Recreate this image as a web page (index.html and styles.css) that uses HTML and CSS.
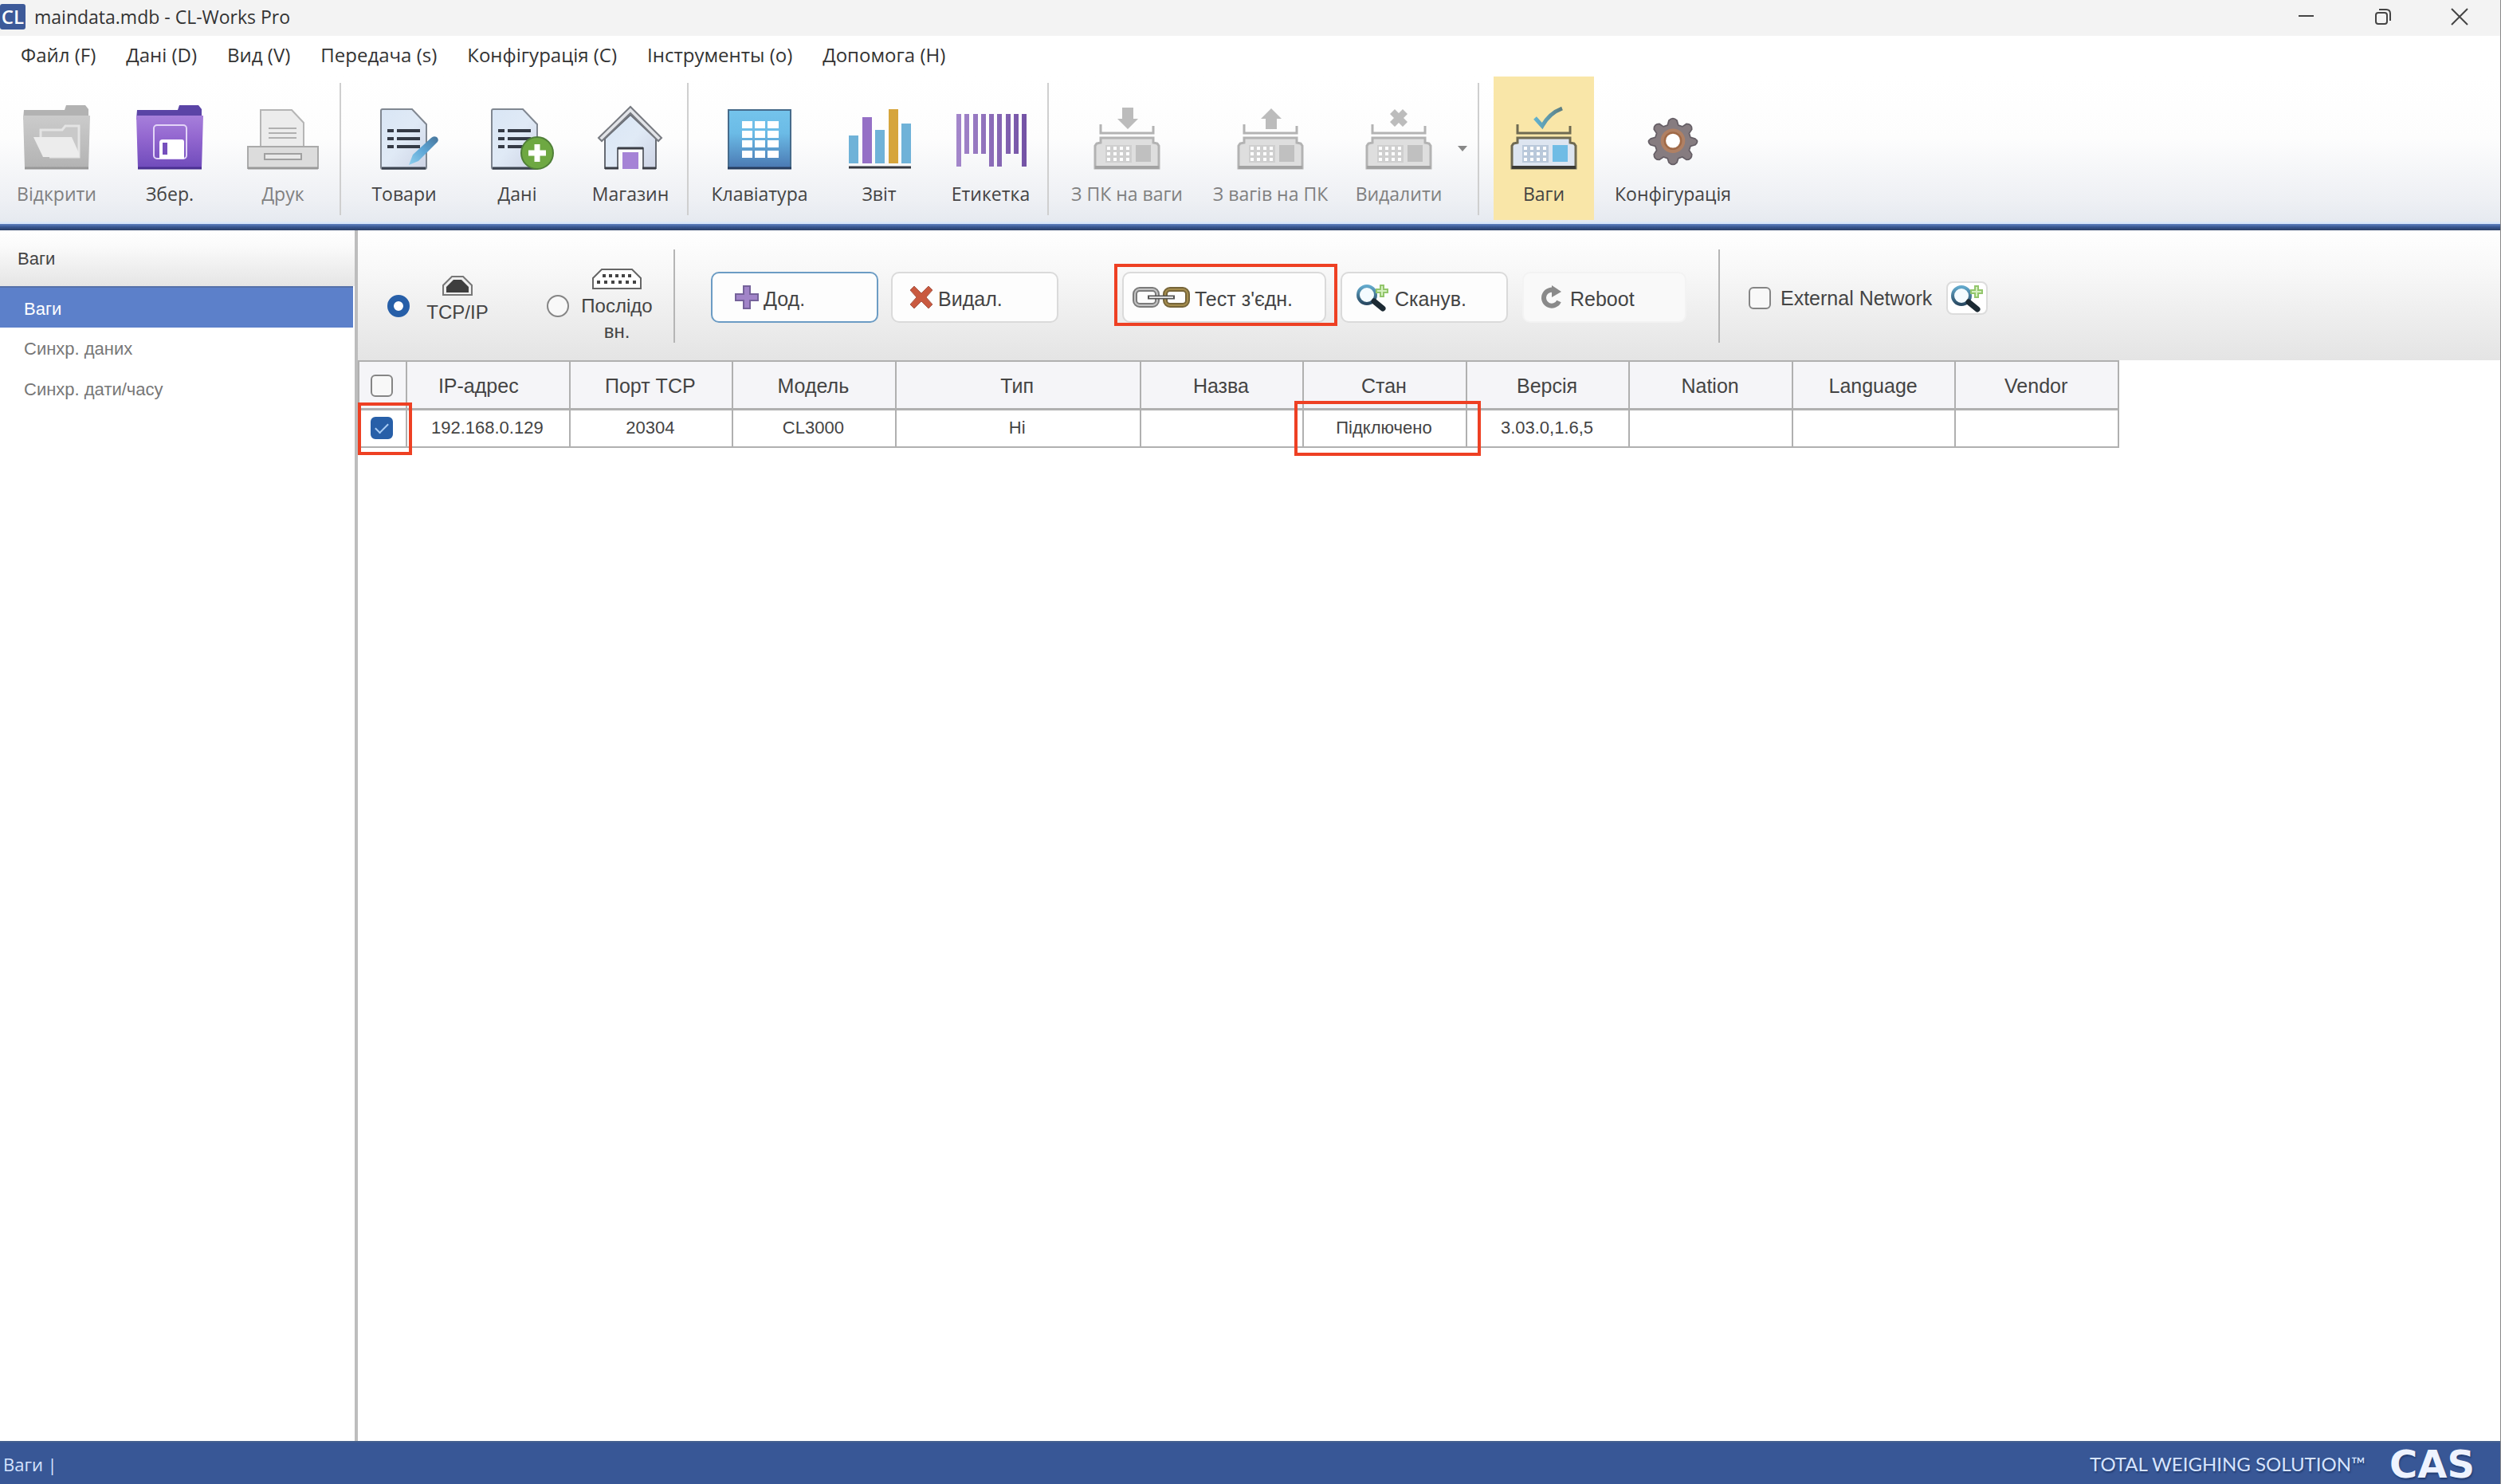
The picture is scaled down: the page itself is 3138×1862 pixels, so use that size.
FILE: index.html
```html
<!DOCTYPE html>
<html lang="uk">
<head>
<meta charset="utf-8">
<title>maindata.mdb - CL-Works Pro</title>
<link rel="stylesheet" href="styles.css">
</head>
<body>
<svg class="defs" width="0" height="0" aria-hidden="true">
  <defs>
    <linearGradient id="g-grey" x1="0" y1="0" x2="0" y2="1"><stop offset="0" stop-color="#cbcbcb"/><stop offset="1" stop-color="#b3b3b3"/></linearGradient>
    <linearGradient id="g-purple" x1="0" y1="0" x2="0" y2="1"><stop offset="0" stop-color="#a67fdb"/><stop offset=".4" stop-color="#9468d0"/><stop offset="1" stop-color="#6f4bbb"/></linearGradient>
    <linearGradient id="g-paper" x1="0" y1="0" x2="1" y2="1"><stop offset="0" stop-color="#d9e6f5"/><stop offset=".5" stop-color="#e0eaf6"/><stop offset="1" stop-color="#cdd3e4"/></linearGradient>
    <linearGradient id="g-blue" x1="0" y1="0" x2="0" y2="1"><stop offset="0" stop-color="#74c4ec"/><stop offset=".4" stop-color="#6bbbe6"/><stop offset="1" stop-color="#4a78b2"/></linearGradient>
    <linearGradient id="g-bars" x1="0" y1="0" x2="1" y2="0"><stop offset="0" stop-color="#a487cb"/><stop offset="1" stop-color="#7352a5"/></linearGradient>
    <linearGradient id="g-pen" x1="1" y1="0" x2="0" y2="1"><stop offset="0" stop-color="#46749a"/><stop offset=".5" stop-color="#5ea6d6"/><stop offset="1" stop-color="#8fd0ee"/></linearGradient>
    <linearGradient id="g-lens" x1="0" y1="0" x2="0" y2="1"><stop offset="0" stop-color="#62a9cc"/><stop offset="1" stop-color="#2a4a63"/></linearGradient>
    <linearGradient id="g-check" x1="0" y1="0" x2="1" y2="0"><stop offset="0" stop-color="#62b2cf"/><stop offset="1" stop-color="#5d7d80"/></linearGradient>
  </defs>
  <symbol id="scale" viewBox="0 0 90 84">
    <path class="sc-line" d="M12 26v11h66V28" fill="none" stroke-width="3"/>
    <path class="sc-body" d="M12 43h66v6l5 1 2 3v28H5V53l2-3 5-1z" stroke-width="3"/>
    <path class="sc-base" d="M5 80h80" stroke-width="4"/>
    <path d="M18 52h33v22H18z" class="sc-pad"/>
    <g fill="#fff"><path d="M20 54h4v4h-4zM28 54h4v4h-4zM36 54h4v4h-4zM44 54h4v4h-4zM20 61h4v4h-4zM28 61h4v4h-4zM36 61h4v4h-4zM44 61h4v4h-4zM20 68h4v4h-4zM28 68h4v4h-4zM36 68h4v4h-4zM44 68h4v4h-4z"/></g>
    <path class="sc-screen" d="M56 52h19v21H56z"/>
  </symbol>
  <symbol id="search-plus" viewBox="0 0 44 36">
    <circle cx="15" cy="15" r="11" fill="#f4fbff" stroke="url(#g-lens)" stroke-width="4"/>
    <path d="M24 23l11 9" stroke="#1c2a33" stroke-width="7" stroke-linecap="round"/>
    <path d="M32 3h4v5h5v4h-5v5h-4v-5h-5V8h5z" fill="#d5f0c0" stroke="#93c66c" stroke-width="2"/>
  </symbol>
  <symbol id="doc" viewBox="0 0 90 84">
    <path d="M18 7h37l18 19v54q0 2-2 2H18q-2 0-2-2V9q0-2 2-2z" fill="url(#g-paper)" stroke="#808791" stroke-width="2"/>
    <path d="M17 81h55" stroke="#3c4450" stroke-width="3"/>
    <path d="M24 34h8M24 44h8M24 54h8M36 34h29M36 44h29M36 54h29" stroke="#343a45" stroke-width="4"/>
  </symbol>
</svg>

<header class="titlebar">
  <span class="app-icon">CL</span>
  <h1 class="title">maindata.mdb - CL-Works Pro</h1>
  <div class="window-buttons">
    <button type="button" aria-label="Minimize"><svg width="22" height="22" viewBox="0 0 22 22"><path d="M1 10h19"/></svg></button>
    <button type="button" aria-label="Restore"><svg width="22" height="22" viewBox="0 0 22 22"><rect x="2" y="6" width="14" height="14" rx="3"/><path d="M6 2h9q5 0 5 5v9"/></svg></button>
    <button type="button" aria-label="Close"><svg width="22" height="22" viewBox="0 0 22 22"><path d="M1 1l20 20M21 1L1 21"/></svg></button>
  </div>
</header>

<nav class="menubar">
  <button type="button">Файл (F)</button>
  <button type="button">Дані (D)</button>
  <button type="button">Вид (V)</button>
  <button type="button">Передача (s)</button>
  <button type="button">Конфігурація (C)</button>
  <button type="button">Інструменты (о)</button>
  <button type="button">Допомога (H)</button>
</nav>

<div class="ribbon">
  <div class="group">
    <button type="button" class="tool w-m" disabled>
      <svg viewBox="0 0 90 84"><path d="M4 8h51l2-6h24l4 5v13H3z" fill="#b2b2b2"/><path d="M3 15h84l-2 66H5z" fill="url(#g-grey)"/><path d="M5 81h80" stroke="#989898" stroke-width="3"/><path d="M25 42V33h27l4-5h17v39H36" fill="#c9c9c9" stroke="#e4e4e4" stroke-width="3"/><path d="M16 42h48l9 20v5H28z" fill="#ececec"/></svg>
      <span>Відкрити</span></button>
    <button type="button" class="tool w-m">
      <svg viewBox="0 0 90 84"><path d="M4 8h51l2-6h24l4 5v13H3z" fill="#5a44a6"/><path d="M3 15h84l-2 66H5z" fill="url(#g-purple)"/><path d="M5 81h80" stroke="#4a3091" stroke-width="3"/><rect x="25" y="27" width="41" height="42" rx="4" fill="none" stroke="#e3d5f7" stroke-width="2"/><path d="M32 69V49q0-4 4-4h24q3 0 3 3v21z" fill="#fff"/><path d="M36 49h6v15h-6z" fill="#7650bd"/></svg>
      <span>Збер.</span></button>
    <button type="button" class="tool w-m" disabled>
      <svg viewBox="0 0 90 84"><path d="M17 54V8h39l15 16v30z" fill="#ececec" stroke="#b5b5b5" stroke-width="2"/><path d="M1 54h88v27H1z" fill="#dcdcdc" stroke="#aaa" stroke-width="2"/><path d="M1 81h88" stroke="#999" stroke-width="3"/><path d="M27 31h35M27 37h35M27 43h35" stroke="#b0b0b0" stroke-width="2"/><path d="M22 63h46v7H22z" fill="#e8e8e8" stroke="#a0a0a0" stroke-width="2"/></svg>
      <span>Друк</span></button>
  </div>
  <div class="group">
    <button type="button" class="tool w-m">
      <svg viewBox="0 0 90 84"><use href="#doc"/><path d="M51 77l5-13 23-21q3-3 7-1 3 3 1 6L63 72z" fill="url(#g-pen)"/></svg>
      <span>Товари</span></button>
    <button type="button" class="tool w-m">
      <svg viewBox="3 0 90 84"><use href="#doc" width="90" height="84"/><circle cx="73" cy="62" r="20" fill="#6ea842" stroke="#4f7f38" stroke-width="2"/><path d="M73 51v22M62 62h22" stroke="#fff" stroke-width="7"/></svg>
      <span>Дані</span></button>
    <button type="button" class="tool w-m">
      <svg viewBox="0 0 90 84"><path d="M13 81V44L45 14l32 30v37H61V56H29v25z" fill="url(#g-paper)" stroke="#676b73" stroke-width="2"/><path d="M5 43L45 4l39 39-4 4L45 12 9 47z" fill="#e2e4e8" stroke="#777a80" stroke-width="2"/><path d="M13 81h17M60 81h17M29 56h32" stroke="#3b3e46" stroke-width="3"/><path d="M35 61h20v21H35z" fill="#a583d6"/></svg>
      <span>Магазин</span></button>
  </div>
  <div class="group">
    <button type="button" class="tool w-l">
      <svg viewBox="0 0 90 84"><path d="M6 8h78v73H6z" fill="url(#g-blue)" stroke="#466b8b" stroke-width="2"/><path d="M5 81h80" stroke="#263c5e" stroke-width="3"/><path d="M23 22h13v9H23zM39 22h13v9H39zM55 22h14v9H55zM23 34h13v9H23zM39 34h13v9H39zM55 34h14v9H55zM23 46h13v9H23zM39 46h13v9H39zM55 46h14v9H55zM23 59h13v9H23zM39 59h13v9H39zM55 59h14v9H55z" fill="#fff"/></svg>
      <span>Клавіатура</span></button>
    <button type="button" class="tool w-l">
      <svg viewBox="0 0 90 84"><path d="M7 40h12v35H7zM40 33h12v42H40zM73 25h12v50H73z" fill="#6fb2d8"/><path d="M24 17h12v58H24z" fill="#9570c6"/><path d="M57 7h12v68H57z" fill="#d6a53c"/><path d="M7 80h78" stroke="#35383f" stroke-width="3"/></svg>
      <span>Звіт</span></button>
    <button type="button" class="tool w-s">
      <svg viewBox="0 0 90 84"><path d="M2 13h6v66H2zM12 13h6v50h-6zM23 13h6v50h-6zM33 13h6v50h-6zM43 13h6v66h-6zM53 13h6v66h-6zM64 13h6v50h-6zM74 13h6v50h-6zM84 13h6v66h-6z" fill="url(#g-bars)"/></svg>
      <span>Етикетка</span></button>
  </div>
  <div class="group">
    <button type="button" class="tool w-xl" disabled>
      <svg class="scale-grey" viewBox="0 0 90 84"><use href="#scale"/><path d="M39 5h14v14h6L46 32 33 19h6z" fill="#bcbcbc"/></svg>
      <span>З ПК на ваги</span></button>
    <button type="button" class="tool w-xl" disabled>
      <svg class="scale-grey" viewBox="0 0 90 84"><use href="#scale"/><path d="M39 32h14V19h6L46 6 33 19h6z" fill="#bcbcbc"/></svg>
      <span>З вагів на ПК</span></button>
    <button type="button" class="tool w-m" disabled>
      <svg class="scale-grey" viewBox="0 0 90 84"><use href="#scale"/><path d="M40 7l5 5 5-5 6 6-5 5 5 5-6 6-5-5-5 5-6-6 5-5-5-5z" fill="#bcbcbc"/></svg>
      <span>Видалити</span></button>
    <button type="button" class="drop" aria-label="Видалити: більше"><svg width="12" height="8" viewBox="0 0 12 8"><path d="M0 1h12L6 8z" fill="#888"/></svg></button>
  </div>
  <div class="group">
    <button type="button" class="tool active">
      <svg class="scale-color" viewBox="0 0 90 84"><use href="#scale"/><path d="M34 18l9 10q9-16 25-22" fill="none" stroke="url(#g-check)" stroke-width="5"/></svg>
      <span>Ваги</span></button>
    <button type="button" class="tool w-xl">
      <svg viewBox="-8 -6 106 99"><g fill="#867c80" stroke="#655e65" stroke-width="2"><path d="M39 19q6-6 12 0l2 7 6 2 6-4q8 0 8 8l-4 6 2 6 7 2q6 4 0 9l-7 2-2 6 4 6q0 8-8 8l-6-4-6 2-2 6q-6 6-12 0l-2-6-6-2-6 4q-8 0-8-8l4-6-2-6-7-2q-6-5 0-9l7-2 2-6-4-6q0-8 8-8l6 4 6-2z"/></g><circle cx="45" cy="49" r="18" fill="#b08063"/><circle cx="45" cy="49" r="12" fill="#fff" stroke="#a06a48" stroke-width="3"/></svg>
      <span>Конфігурація</span></button>
  </div>
</div>

<div class="workspace">
  <aside class="sidebar">
    <h2 class="side-title">Ваги</h2>
    <a href="#scales" class="side-link selected">Ваги</a>
    <a href="#sync-data" class="side-link">Синхр. даних</a>
    <a href="#sync-time" class="side-link">Синхр. дати/часу</a>
  </aside>

  <main class="content">
    <form class="actions">
      <div class="links">
        <label class="radio"><input type="radio" name="link" checked>
          <span class="port"><svg width="38" height="25" viewBox="0 0 38 25"><path d="M1 24V12L12 1h14l11 11v12z" fill="#eee" stroke="#777" stroke-width="2"/><path d="M5 21v-7l9-9h10l9 9v7z" fill="#3e3e3e"/></svg><span>TCP/IP</span></span></label>
        <label class="radio"><input type="radio" name="link">
          <span class="port serial"><svg width="62" height="26" viewBox="0 0 62 26"><path d="M1 25V12L12 1h38l11 11v13z" fill="#fff" stroke="#666" stroke-width="2"/><path d="M13 9h38" stroke="#444" stroke-width="4" stroke-dasharray="4 4"/><path d="M6 17h52" stroke="#444" stroke-width="4" stroke-dasharray="4 5"/></svg><span>Послідовн.</span></span></label>
      </div>
      <div class="buttons">
        <button type="button" class="btn focused"><svg width="30" height="30" viewBox="0 0 30 30"><path d="M11 1h8v10h10v8H19v10h-8V19H1v-8h10z" fill="#a184c8" stroke="#75629a" stroke-width="2"/></svg>Дод.</button>
        <button type="button" class="btn remove"><svg width="30" height="30" viewBox="0 0 30 30"><path d="M6 1l9 9 9-9 5 5-8 9 8 9-5 5-9-9-9 9-5-5 8-9-8-9z" fill="#c9593f" stroke="#a75c4e" stroke-width="1"/></svg>Видал.</button>
        <div class="marked">
          <button type="button" class="btn test"><svg width="72" height="26" viewBox="0 0 72 26"><g fill="none"><rect x="3" y="3" width="28" height="20" rx="6" stroke="#7b7b7b" stroke-width="6"/><rect x="3" y="3" width="28" height="20" rx="6" stroke="#c4c4c4" stroke-width="2"/><rect x="41" y="3" width="28" height="20" rx="6" stroke="#76653a" stroke-width="6"/><rect x="41" y="3" width="28" height="20" rx="6" stroke="#a58d4e" stroke-width="2"/><path d="M19 13h34" stroke="#555" stroke-width="5"/><path d="M21 13h30" stroke="#ddd" stroke-width="2"/></g></svg>Тест з'єдн.</button>
        </div>
        <button type="button" class="btn scan"><svg width="44" height="36"><use href="#search-plus"/></svg>Сканув.</button>
        <button type="button" class="btn reboot"><svg width="30" height="32" viewBox="0 0 30 32"><path d="M24 21a10 10 0 1 1-4-13" fill="none" stroke="#8a8a8a" stroke-width="6"/><path d="M15 1l12 8-12 7z" fill="#8a8a8a"/></svg>Reboot</button>
      </div>
      <div class="network">
        <label class="check"><input type="checkbox">External Network</label>
        <button type="button" class="find" aria-label="Search network"><svg width="44" height="36"><use href="#search-plus"/></svg></button>
      </div>
    </form>

    <table class="devices">
      <colgroup><col class="c-check"><col><col><col><col class="c-type"><col><col><col><col><col><col></colgroup>
      <thead><tr><th><input type="checkbox" aria-label="Вибрати все"></th><th class="near">IP-адрес</th><th>Порт TCP</th><th>Модель</th><th>Тип</th><th>Назва</th><th>Стан</th><th>Версія</th><th>Nation</th><th>Language</th><th>Vendor</th></tr></thead>
      <tbody><tr><td class="mark"><input type="checkbox" aria-label="192.168.0.129" checked></td><td>192.168.0.129</td><td>20304</td><td>CL3000</td><td>Hi</td><td></td><td class="mark wide">Підключено</td><td>3.03.0,1.6,5</td><td></td><td></td><td></td></tr></tbody>
    </table>
  </main>
</div>

<footer class="statusbar">
  <span>Ваги |</span>
  <span class="slogan">TOTAL WEIGHING SOLUTION™</span>
  <strong class="brand">CAS</strong>
</footer>
</body>
</html>
```
FILE: styles.css
```css
* { box-sizing: border-box; }

body {
  margin: 0;
  min-height: 100vh;
  display: flex;
  flex-direction: column;
  background: #fff;
  border-right: 1px solid #8a8a8a;
  color: #444;
  font: 22px/32px "Liberation Sans", Arial, sans-serif;
}

button, input { font: inherit; color: inherit; margin: 0; }
button { background: none; border: 0; padding: 0; }
h1, h2 { margin: 0; font-weight: 400; }
svg { display: block; flex: none; }
.defs { position: absolute; }

/* Title bar */
.titlebar {
  display: flex;
  align-items: center;
  height: 45px;
  padding-bottom: 3px;
  background: #f3f3f3;
}
.app-icon {
  width: 32px;
  height: 32px;
  margin-right: 11px;
  border-radius: 3px;
  background: #3d5a99;
  color: #fff;
  font: 600 24px/32px "Open Sans", sans-serif;
  text-align: center;
}
.title {
  flex: 1;
  font: 23px/32px "Open Sans", "Noto Sans", sans-serif;
  color: #333;
}
.window-buttons { display: flex; margin-right: 3px; }
.window-buttons button {
  width: 96px;
  height: 42px;
  display: grid;
  place-items: center;
}
.window-buttons svg { fill: none; stroke: #444; stroke-width: 2; }

/* Menu */
.menubar {
  display: flex;
  gap: 38px;
  height: 51px;
  padding: 8px 26px 11px;
  font: 24px/32px "Open Sans", "Noto Sans", sans-serif;
  color: #333;
}

/* Ribbon */
.ribbon {
  display: flex;
  height: 193px;
  background: linear-gradient(#fff 0, #fdfdfd 40%, #eef0f4 80%, #e6eaf0 94%, #d9e7fa 95%, #d9e7fa 96%, #5d7fbd 96%, #36558f 98%, #2c4066 100%);
  font: 23px/32px "Open Sans", "Noto Sans", sans-serif;
}
.group {
  display: flex;
  padding-right: 10px;
}
.group:not(:last-child)::after {
  content: "";
  width: 2px;
  height: 166px;
  margin-top: 8px;
  background: #cfcfcf;
}
.group:first-child { padding-right: 8px; }
.group:nth-child(3) { padding: 0 8px 0 4px; }
.group:nth-child(3)::after { margin-left: 6px; }
.group:nth-child(4) { padding-right: 18px; }
.tool {
  display: flex;
  flex-direction: column;
  align-items: center;
  height: 180px;
  padding: 34px 0 0;
  white-space: nowrap;
  color: #444;
}
.tool svg { width: 90px; height: 84px; margin-bottom: 13px; overflow: visible; }
.tool:disabled { color: #808080; }
.w-s { width: 130px; }
.w-m { width: 142px; }
.w-l { width: 150px; }
.w-xl { width: 180px; }
.active { width: 126px; margin-right: 9px; background: #f9e6a8; }
.drop { width: 28px; height: 180px; padding-right: 10px; display: grid; place-items: center; }

.sc-body { fill: var(--body); stroke: var(--edge); }
.sc-line { stroke: var(--edge); }
.sc-base { stroke: var(--base); }
.sc-pad { fill: var(--pad); }
.sc-screen { fill: var(--screen); }
.scale-grey { --body: #dedede; --edge: #b3b3b3; --base: #a2a2a2; --pad: #cfcfcf; --screen: #c0c0c0; }
.scale-color { --body: #dde5f0; --edge: #6f6a52; --base: #3a3a35; --pad: #b9c8da; --screen: #70bce5; }

/* Workspace */
.workspace { flex: 1; display: flex; }
.sidebar { width: 449px; border-right: 4px solid #bdbdbd; }
.side-title {
  height: 70px;
  padding: 20px 22px 0;
  background: linear-gradient(#fff, #fafafa 30%, #e5e5e5);
  font-size: 22px;
  line-height: 32px;
}
.side-link {
  display: block;
  height: 51px;
  padding: 11px 30px 0;
  color: #777;
  text-decoration: none;
}
.selected { height: 52px; margin-right: 2px; border-top: 2px solid #5671a9; background: #5c80ca; color: #fff; }

.content { flex: 1; min-width: 0; }
.actions {
  display: flex;
  align-items: flex-start;
  height: 163px;
  padding-top: 24px;
  background: linear-gradient(#fff, #f8f8f8 30%, #e4e4e4);
  font-size: 25px;
}
.links {
  display: flex;
  width: 398px;
  height: 117px;
  padding: 24px 0 0 37px;
  border-right: 2px solid #b5b5b5;
  font-size: 24px;
}
.radio { display: flex; align-items: flex-start; }
.radio + .radio { margin-left: 74px; }
.port { display: flex; flex-direction: column; align-items: center; width: 76px; margin: 9px 0 0 22px; }
.port svg { margin-bottom: 5px; }
.serial { width: 94px; margin: 0 0 0 13px; word-break: break-all; text-align: center; }

input[type="radio"], input[type="checkbox"] {
  appearance: none;
  flex: none;
  display: block;
  width: 28px;
  height: 28px;
  border: 2px solid #858585;
  border-radius: 6px;
  background: #f8f8f8;
}
input[type="radio"] { border-radius: 50%; margin-top: 33px; }
input[type="radio"]:checked { border: 8px solid #275fa8; background: #fff; }

.buttons { display: flex; align-items: center; margin: 18px 0 0 45px; height: 84px; }
.btn {
  display: flex;
  align-items: center;
  gap: 6px;
  width: 210px;
  height: 64px;
  padding-top: 3px;
  padding-left: 28px;
  border: 2px solid #dadada;
  border-radius: 10px;
  background: #fdfdfd;
  white-space: nowrap;
}
.btn svg { margin-bottom: 4px; }
.focused { border-color: #6c9cc4; }
.remove { margin-left: 16px; padding-left: 21px; }
.marked { margin: 0 4px 6px 70px; padding: 6px 10px 0 6px; border: 4px solid #ee4023; }
.test { width: 256px; padding-left: 11px; }
.scan { padding-left: 16px; }
.reboot { width: 206px; margin-left: 18px; padding-left: 20px; gap: 8px; border-color: #f3f3f3; background: #f9f9f9; }

.network {
  display: flex;
  align-items: center;
  height: 117px;
  margin-left: 40px;
  padding: 4px 0 0 36px;
  border-left: 2px solid #b5b5b5;
}
.check { display: flex; align-items: center; gap: 12px; margin-right: 18px; }
.find { width: 52px; height: 42px; padding: 1px 2px; border: 2px solid #dcdcdc; border-radius: 8px; background: #fff; }

/* Device table */
.devices {
  width: 2210px;
  table-layout: fixed;
  border-collapse: collapse;
}
.c-check { width: 60px; }
.c-type { width: 307px; }
th, td { border: 2px solid #b0b0b0; padding: 0 2px 0 0; text-align: center; font-weight: 400; }
th { height: 60px; padding-top: 3px; background: #f5f5f8; border-bottom-width: 3px; font-size: 25px; }
td { height: 48px; }
.near { padding-right: 42px; padding-left: 20px; }
th.near { padding: 3px 44px 0 20px; }
td input:checked {
  border-color: #275fa8;
  background: #275fa8;
  display: grid;
  place-items: center;
}
th input[type="checkbox"], td input[type="checkbox"] { margin: 0 auto; }
td input:checked::before {
  content: "";
  width: 14px;
  height: 7px;
  border: solid #a9cdf5;
  border-width: 0 0 2px 2px;
  rotate: -45deg;
  translate: 0 -2px;
}
.mark { position: relative; }
.mark::after { content: ""; position: absolute; inset: -10px -8px -11px -2px; border: 4px solid #ee4023; }
.wide::after { inset: -12px -19px -12px -12px; }

/* Status bar */
.statusbar {
  display: flex;
  align-items: center;
  height: 54px;
  padding: 2px 32px 0 4px;
  background: #385796;
  border-top: 2px solid #44608f;
  color: #d6e4ff;
  font: 22px/32px "Open Sans", "Noto Sans", sans-serif;
}
.slogan { margin-left: auto; font: 24px/32px Lato, sans-serif; text-shadow: 1px 2px 2px #223c70; }
.brand { margin-left: 30px; font: 700 48px/48px "DejaVu Sans", sans-serif; color: #eef3ff; text-shadow: 1px 2px 2px #223c70; }
```
